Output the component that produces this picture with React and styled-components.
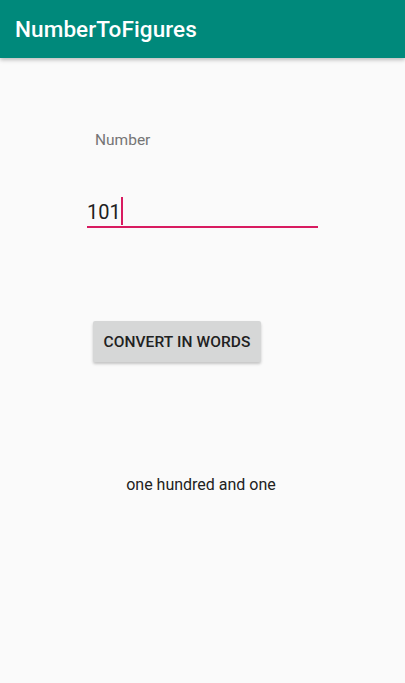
import React from 'react';
import styled, { createGlobalStyle } from 'styled-components';

const GlobalStyle = createGlobalStyle`
  html, body {
    margin: 0;
    padding: 0;
    background: #fafafa;
    font-family: Roboto, "Liberation Sans", sans-serif;
  }
`;

const Screen = styled.div`
  width: 405px;
  height: 683px;
  background: #fafafa;
  display: flex;
  flex-direction: column;
  overflow: hidden;
`;

const AppBar = styled.header`
  height: 58px;
  background: #00897b;
  display: flex;
  align-items: center;
  padding-left: 15px;
  box-shadow: 0 2px 4px rgba(0, 0, 0, 0.25);
  position: relative;
  z-index: 1;
  flex-shrink: 0;
`;

const Title = styled.h1`
  margin: 0;
  color: #fff;
  font-size: 22.5px;
  font-weight: 500;
  letter-spacing: 0.1px;
`;

const Content = styled.main`
  display: flex;
  flex-direction: column;
  padding: 0 87px;
`;

const Label = styled.div`
  margin-top: 72px;
  padding-left: 8px;
  color: #757575;
  font-size: 15.5px;
  line-height: 20px;
`;

const Field = styled.div`
  margin-top: 47px;
  width: 231px;
  height: 29px;
  display: flex;
  align-items: flex-start;
  border-bottom: 2px solid #d81b60;
`;

const Value = styled.span`
  color: #212121;
  font-size: 20px;
  line-height: 28px;
  margin-top: 1px;
`;

const Caret = styled.span`
  display: inline-block;
  width: 2px;
  height: 28px;
  margin-left: 0;
  background: #d81b60;
`;

const Button = styled.button`
  margin: 93px 0 0 6px;
  align-self: flex-start;
  width: 168px;
  height: 41px;
  border: none;
  border-radius: 2px;
  background: #d6d7d7;
  color: #212121;
  font-family: Roboto, "Liberation Sans", sans-serif;
  font-size: 15.5px;
  font-weight: 500;
  letter-spacing: 0.1px;
  padding: 0;
  box-shadow: 0 2px 3px rgba(0, 0, 0, 0.22);
`;

const Result = styled.div`
  margin-top: 112px;
  text-align: center;
  margin-left: -87px;
  margin-right: -87px;
  padding-right: 3px;
  color: #212121;
  font-size: 16px;
  line-height: 22px;
`;

export default function App() {
  return (
    <Screen>
      <GlobalStyle />
      <AppBar>
        <Title>NumberToFigures</Title>
      </AppBar>
      <Content>
        <Label>Number</Label>
        <Field>
          <Value>101</Value>
          <Caret />
        </Field>
        <Button>CONVERT IN WORDS</Button>
        <Result>one hundred and one</Result>
      </Content>
    </Screen>
  );
}
